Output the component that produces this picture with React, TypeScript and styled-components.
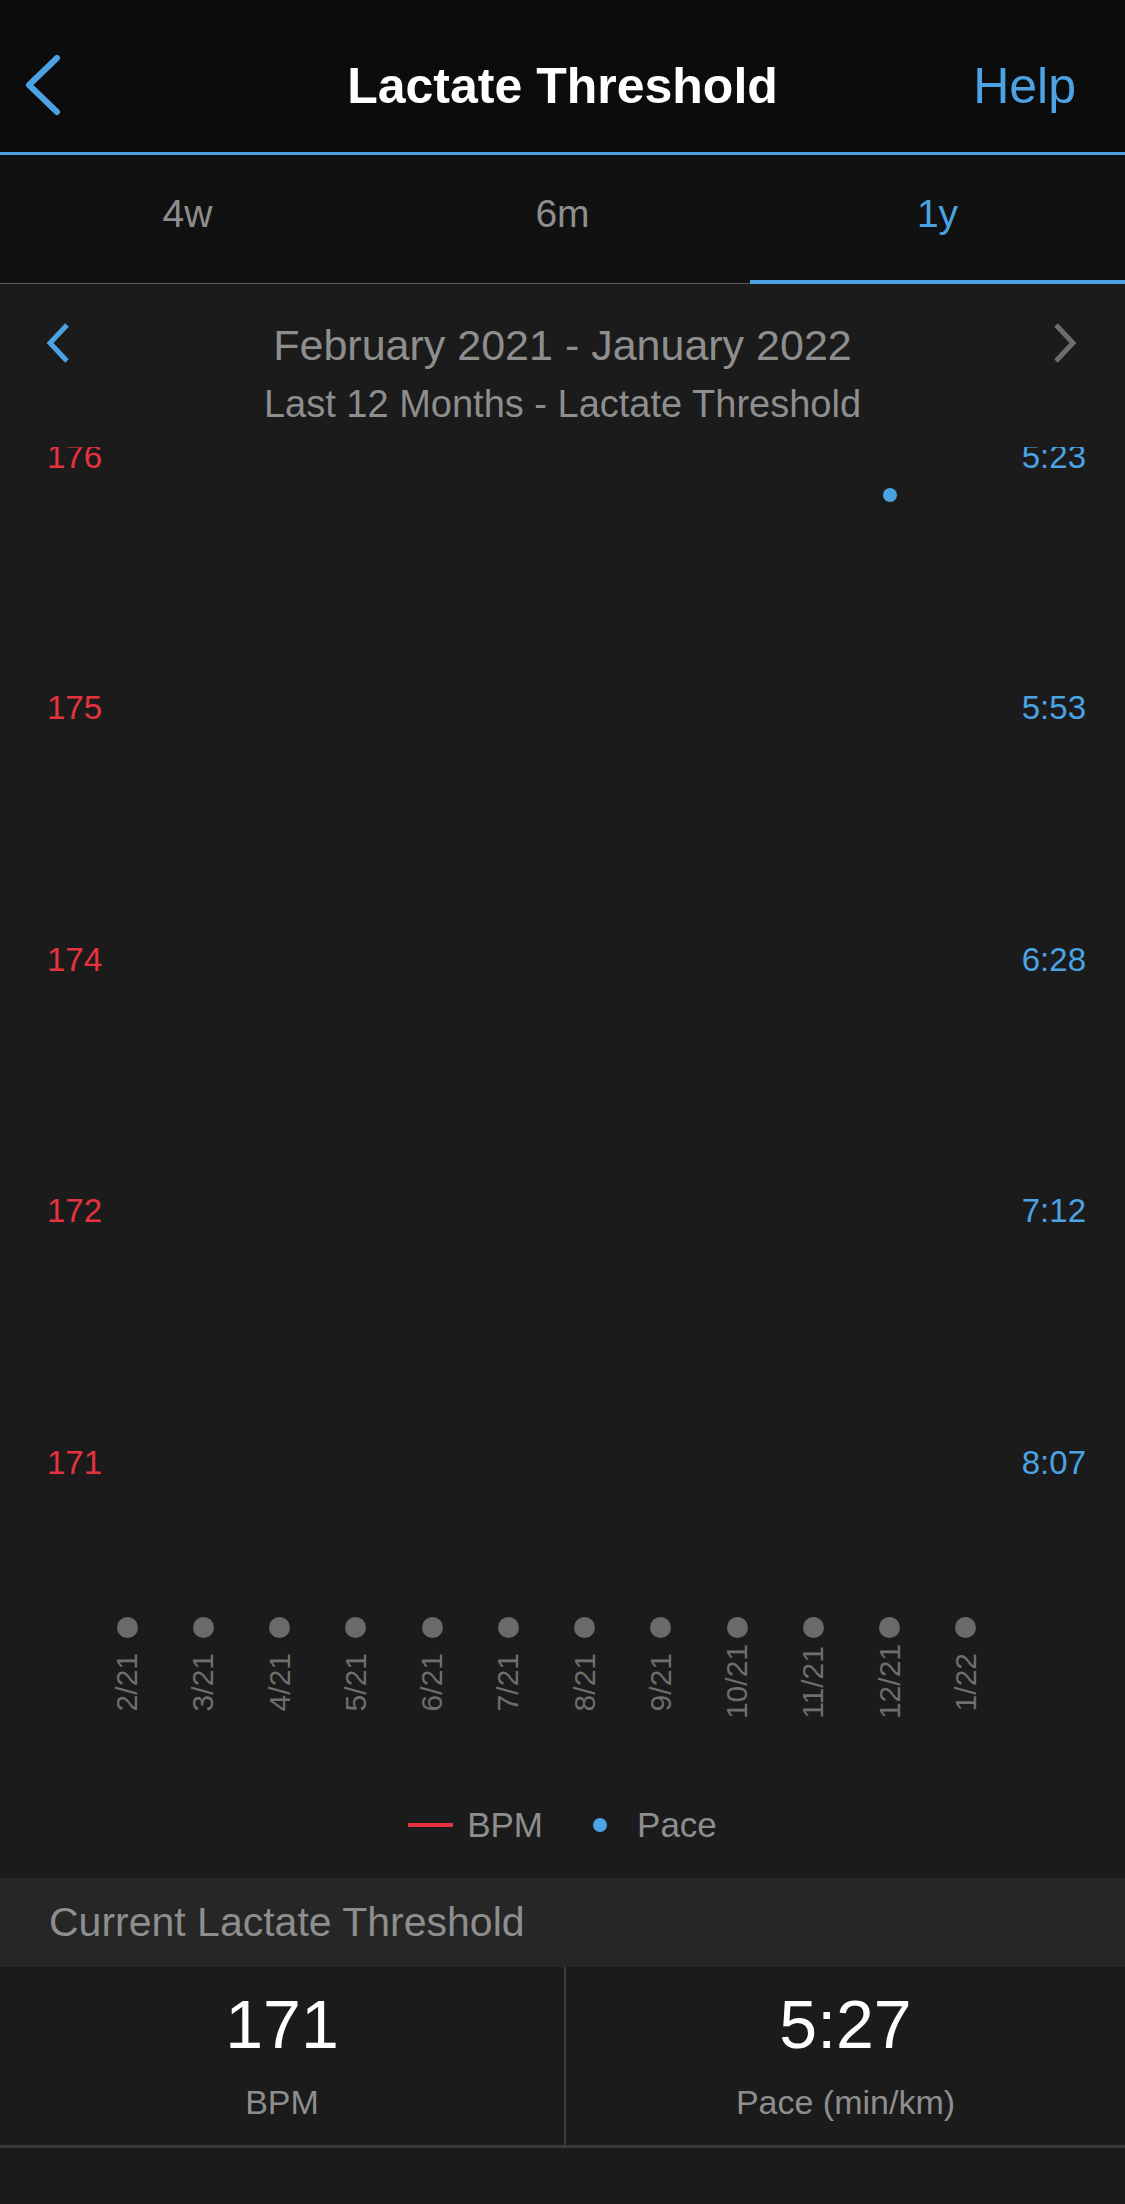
import { createGlobalStyle, styled } from 'styled-components';

const BLUE = '#4ba3e4';
const RED = '#e6323f';
const GRAY = '#8e8e8e';

const months = ['2/21', '3/21', '4/21', '5/21', '6/21', '7/21', '8/21', '9/21', '10/21', '11/21', '12/21', '1/22'];
const bpmTicks = ['176', '175', '174', '172', '171'];
const paceTicks = ['5:23', '5:53', '6:28', '7:12', '8:07'];
const tabs = ['4w', '6m', '1y'];

// axis geometry (px)
const AXIS_LEFT = 89;
const AXIS_WIDTH = 915;
const STEP = AXIS_WIDTH / months.length;
const paceSample = { month: 10, top: 48 };

const GlobalStyle = createGlobalStyle`
  * { box-sizing: border-box; }
  body {
    margin: 0;
    background: #1b1b1b;
    font-family: "Liberation Sans", Arial, sans-serif;
  }
`;

export default function App() {
  return (
    <>
      <GlobalStyle />
      <Page>
        <Header>
          <BackButton aria-label="Back">
            <svg width="42" height="62" viewBox="0 0 42 62">
              <path d="M34 4 L6 31 L34 58" fill="none" stroke={BLUE} strokeWidth="6" strokeLinecap="round" strokeLinejoin="round" />
            </svg>
          </BackButton>
          <Title>Lactate Threshold</Title>
          <HelpLink>Help</HelpLink>
        </Header>

        <TabBar>
          {tabs.map((t, i) => (
            <Tab key={t} active={i === 2}>{t}</Tab>
          ))}
        </TabBar>

        <DateNav>
          <DateRow>
            <Chevron>
              <svg width="26" height="40" viewBox="0 0 26 40">
                <path d="M22 2 L5 20 L22 38" fill="none" stroke={BLUE} strokeWidth="5" strokeLinejoin="miter" />
              </svg>
            </Chevron>
            <DateRange>February 2021 - January 2022</DateRange>
            <Chevron right>
              <svg width="26" height="40" viewBox="0 0 26 40">
                <path d="M4 2 L21 20 L4 38" fill="none" stroke="#6d6d6d" strokeWidth="5" strokeLinejoin="miter" />
              </svg>
            </Chevron>
          </DateRow>
          <Subtitle>Last 12 Months - Lactate Threshold</Subtitle>
        </DateNav>

        <ChartArea>
          <YAxes>
            <TickColumn>
              {bpmTicks.map((v) => (
                <Tick key={v} color={RED}>{v}</Tick>
              ))}
            </TickColumn>
            <TickColumn alignEnd>
              {paceTicks.map((v) => (
                <Tick key={v} color={BLUE}>{v}</Tick>
              ))}
            </TickColumn>
          </YAxes>

          <XAxis>
            {months.map((m) => (
              <MonthCol key={m}>
                <MonthDot />
                <MonthLabelBox>
                  <MonthLabel>{m}</MonthLabel>
                </MonthLabelBox>
              </MonthCol>
            ))}
          </XAxis>

          <PacePoint
            style={{ left: AXIS_LEFT + STEP * (paceSample.month + 0.5) - 7, top: paceSample.top - 7 }}
          />
        </ChartArea>

        <Legend>
          <LegendItem>
            <LegendLine />
            <LegendText>BPM</LegendText>
          </LegendItem>
          <LegendItem>
            <LegendDot />
            <LegendText>Pace</LegendText>
          </LegendItem>
        </Legend>

        <SectionHeader>Current Lactate Threshold</SectionHeader>
        <StatsRow>
          <Stat>
            <StatValue>171</StatValue>
            <StatLabel>BPM</StatLabel>
          </Stat>
          <Stat divider>
            <StatValue>5:27</StatValue>
            <StatLabel>Pace (min/km)</StatLabel>
          </Stat>
        </StatsRow>
        <BottomSpace />
      </Page>
    </>
  );
}

const Page = styled.div`
  width: 1125px;
  min-height: 2204px;
  background: #1b1b1b;
  display: flex;
  flex-direction: column;
`;

const Header = styled.header`
  height: 155px;
  padding-top: 19px;
  display: grid;
  grid-template-columns: 1fr auto 1fr;
  align-items: center;
  background: #0c0c0c;
  border-bottom: 3px solid ${BLUE};
`;

const BackButton = styled.div`
  display: flex;
  align-items: center;
  padding-left: 23px;
  margin-top: -1px;
`;

const Title = styled.h1`
  margin: 0;
  font-size: 50px;
  font-weight: 700;
  color: #ffffff;
  line-height: 60px;
`;

const HelpLink = styled.div`
  justify-self: end;
  padding-right: 49px;
  font-size: 50px;
  color: ${BLUE};
  line-height: 60px;
`;

const TabBar = styled.nav`
  display: grid;
  grid-template-columns: repeat(3, 1fr);
  background: #111111;
  border-bottom: 1px solid #5a5a5a;
`;

const Tab = styled.div<{ active: boolean }>`
  height: 129px;
  margin-bottom: -1px;
  padding-bottom: 8px;
  display: flex;
  align-items: center;
  justify-content: center;
  font-size: 39px;
  color: ${({ active }) => (active ? BLUE : GRAY)};
  border-bottom: 4px solid ${({ active }) => (active ? BLUE : 'transparent')};
`;

const DateNav = styled.section`
  padding-top: 36px;
  padding-bottom: 21px;
  display: flex;
  flex-direction: column;
  align-items: center;
  gap: 12px;
`;

const DateRow = styled.div`
  width: 100%;
  display: grid;
  grid-template-columns: 1fr auto 1fr;
  align-items: center;
`;

const Chevron = styled.div<{ right?: boolean }>`
  display: flex;
  justify-content: ${({ right }) => (right ? 'flex-end' : 'flex-start')};
  padding: ${({ right }) => (right ? '0 47px 0 0' : '0 0 0 45px')};
  margin-top: -4px;
`;

const DateRange = styled.div`
  font-size: 43px;
  line-height: 50px;
  color: ${GRAY};
`;

const Subtitle = styled.div`
  font-size: 38px;
  line-height: 44px;
  color: ${GRAY};
`;

const ChartArea = styled.div`
  position: relative;
  height: 1313px;
  overflow: hidden;
`;

const YAxes = styled.div`
  display: flex;
  justify-content: space-between;
  padding: 0 39px 0 47px;
  margin-top: -6.5px;
`;

const TickColumn = styled.div<{ alignEnd?: boolean }>`
  display: flex;
  flex-direction: column;
  align-items: ${({ alignEnd }) => (alignEnd ? 'flex-end' : 'flex-start')};
  gap: 219.5px;
`;

const Tick = styled.div<{ color: string }>`
  font-size: 33px;
  line-height: 32px;
  color: ${({ color }) => color};
`;

const XAxis = styled.div`
  margin: 138.5px 0 0 ${AXIS_LEFT}px;
  width: ${AXIS_WIDTH}px;
  display: grid;
  grid-template-columns: repeat(12, 1fr);
`;

const MonthCol = styled.div`
  display: flex;
  flex-direction: column;
  align-items: center;
`;

const MonthDot = styled.div`
  width: 21px;
  height: 21px;
  border-radius: 50%;
  background: #6a6a6a;
`;

const MonthLabelBox = styled.div`
  height: 76px;
  margin-top: 6px;
  display: flex;
  align-items: center;
  justify-content: center;
`;

const MonthLabel = styled.span`
  writing-mode: vertical-rl;
  transform: rotate(180deg);
  font-size: 30px;
  line-height: 30px;
  color: #6e6e6e;
`;

const PacePoint = styled.div`
  position: absolute;
  width: 14px;
  height: 14px;
  border-radius: 50%;
  background: ${BLUE};
`;

const Legend = styled.div`
  height: 118px;
  padding-top: 12px;
  display: flex;
  justify-content: center;
  align-items: center;
  gap: 50px;
`;

const LegendItem = styled.div`
  display: flex;
  align-items: center;
  gap: 14px;
`;

const LegendLine = styled.div`
  width: 45px;
  height: 4px;
  background: ${RED};
`;

const LegendDot = styled.div`
  width: 14px;
  height: 14px;
  margin-right: 16px;
  border-radius: 50%;
  background: ${BLUE};
`;

const LegendText = styled.span`
  font-size: 35px;
  color: ${GRAY};
`;

const SectionHeader = styled.div`
  height: 89px;
  padding-left: 49px;
  display: flex;
  align-items: center;
  background: #262626;
  font-size: 41px;
  color: ${GRAY};
`;

const StatsRow = styled.div`
  display: grid;
  grid-template-columns: 564px 1fr;
  border-bottom: 3px solid #3a3a3a;
`;

const Stat = styled.div<{ divider?: boolean }>`
  height: 178px;
  padding-top: 22px;
  display: flex;
  flex-direction: column;
  align-items: center;
  gap: 23px;
  border-left: ${({ divider }) => (divider ? '2px solid #3a3a3a' : 'none')};
`;

const StatValue = styled.div`
  font-size: 68px;
  line-height: 70px;
  color: #ffffff;
`;

const StatLabel = styled.div`
  font-size: 34px;
  line-height: 40px;
  color: ${GRAY};
`;

const BottomSpace = styled.div`
  flex: 1;
  background: #1b1b1b;
`;
